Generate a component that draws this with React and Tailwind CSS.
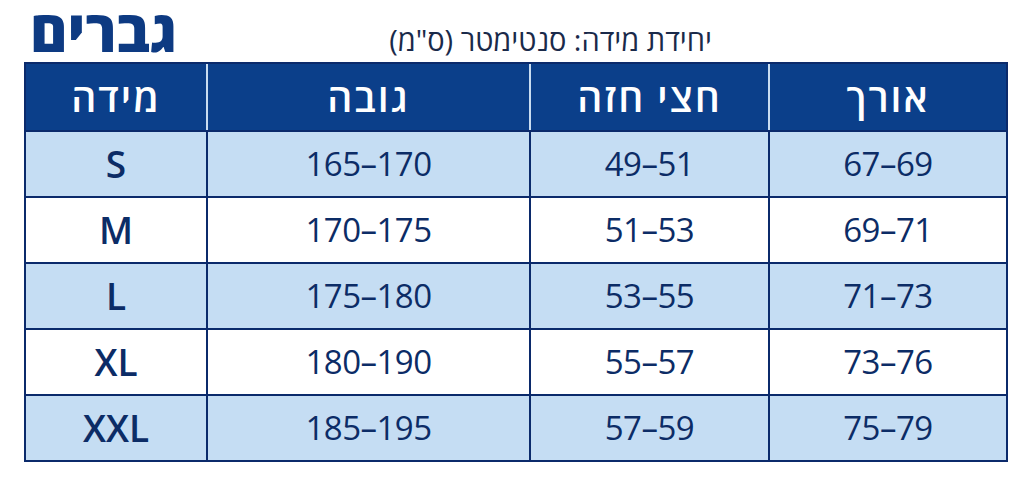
export default function App() {
  const rows = [
    ["S", "165–170", "49–51", "67–69"],
    ["M", "170–175", "51–53", "69–71"],
    ["L", "175–180", "53–55", "71–73"],
    ["XL", "180–190", "55–57", "73–76"],
    ["XXL", "185–195", "57–59", "75–79"],
  ];
  const widths = ["w-[180px]", "w-[323px]", "w-[239px]", "w-[238px]"];
  const headers = ["מידה", "גובה", "חצי חזה", "אורך"];
  return (
    <div
      className="w-[1024px] h-[478px] bg-white text-[#0c2c66]"
      style={{ fontFamily: '"Open Sans", "DejaVu Sans", sans-serif' }}
    >
      <div className="h-[62px] flex items-start pl-[30px] pr-[312px]">
        <div dir="rtl" className="px-[2px] -ml-[2px] text-[57px] font-extrabold leading-[60px] text-[#0d3a82] whitespace-nowrap">
          גברים
        </div>
        <div dir="rtl" className="ml-auto text-[29px] leading-none pt-[25px] text-[#1a2a4a] whitespace-nowrap">
          יחידת מידה: סנטימטר (ס"מ)
        </div>
      </div>
      <div className="ml-[24px] w-[984px] border-2 border-[#0b2a6b]">
        <div className="flex h-[66px] bg-[#0b3f8a]">
          {headers.map((h, i) => (
            <div
              key={i}
              dir="rtl"
              className={`${widths[i]} flex items-center justify-center text-white text-[39px] font-semibold tracking-[2px] ${i > 0 ? "border-l-2 border-[#c9ddf1]" : ""}`}
            >
              {h}
            </div>
          ))}
        </div>
        {rows.map((r, ri) => (
          <div
            key={ri}
            className={`flex h-[66px] border-t-2 border-[#0b2a6b] ${ri % 2 === 0 ? "bg-[#c5ddf3]" : "bg-white"}`}
          >
            {r.map((c, ci) => (
              <div
                key={ci}
                className={`${widths[ci]} flex items-center justify-center ${ci === 0 ? "text-[37px] font-semibold" : "text-[33px] font-medium tracking-[-0.5px]"} ${ci > 0 ? "border-l-2 border-[#0b2a6b]" : ""}`}
              >
                {c}
              </div>
            ))}
          </div>
        ))}
      </div>
    </div>
  );
}
